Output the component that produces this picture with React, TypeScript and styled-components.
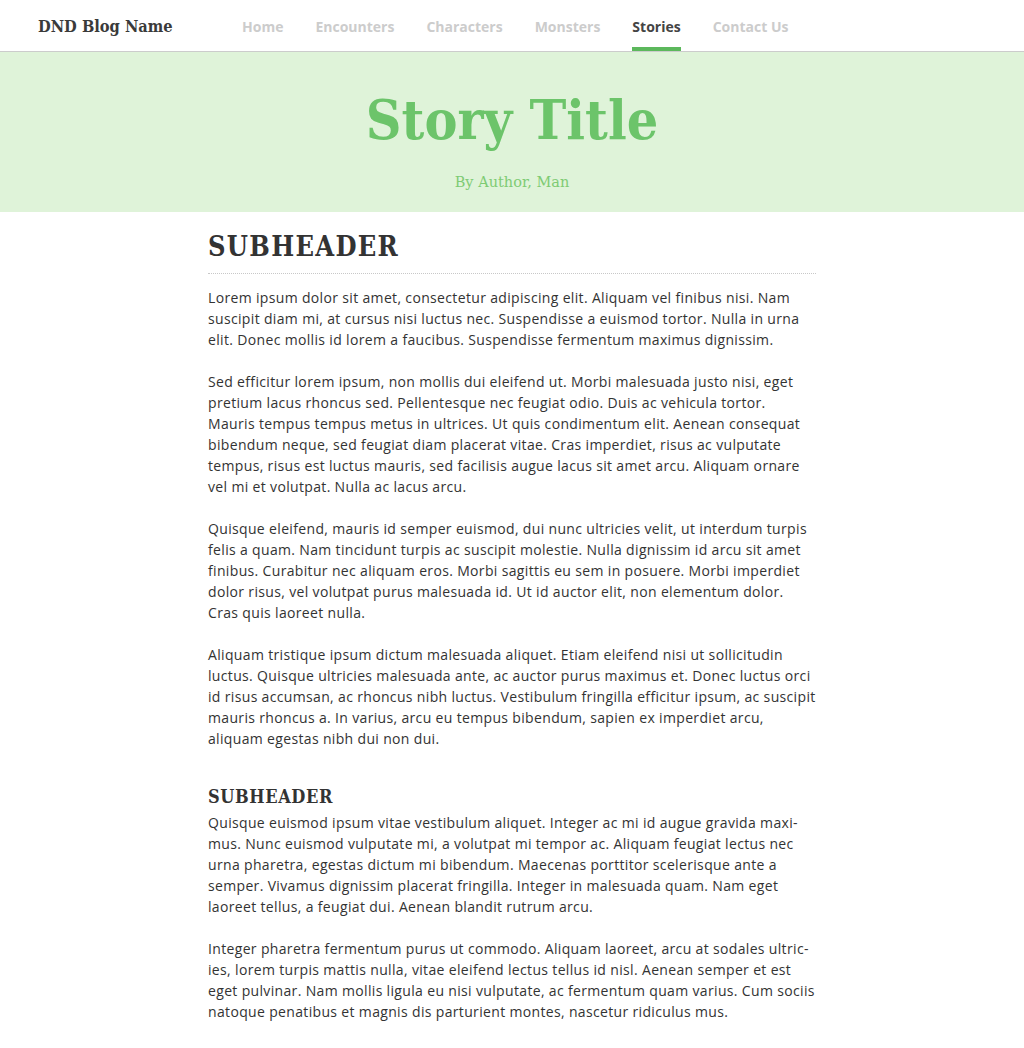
import React from "react";
import styled, { createGlobalStyle } from "styled-components";

const GlobalStyle = createGlobalStyle`
  html, body { margin: 0; padding: 0; background: #ffffff; }
  body { font-family: "Open Sans", "Liberation Sans", sans-serif; color: #333333; }
  * { box-sizing: border-box; }
`;

const slab = `"DejaVu Serif Condensed", "DejaVu Serif", "Liberation Serif", serif`;
const slabWide = `"DejaVu Serif", "Liberation Serif", serif`;

const Header = styled.header`
  display: flex;
  align-items: stretch;
  height: 52px;
  border-bottom: 1px solid #cccccc;
  background: #ffffff;
`;

const Logo = styled.div`
  display: flex;
  align-items: center;
  padding-left: 38px;
  padding-top: 1px;
  width: 242px;
  font-family: ${slab};
  font-stretch: condensed;
  font-weight: bold;
  font-size: 16.3px;
  color: #3a3a3a;
  white-space: nowrap;
`;

const Nav = styled.nav`
  display: flex;
  gap: 32px;
`;

const NavLink = styled.a<{ $active?: boolean }>`
  display: flex;
  align-items: center;
  padding-top: 5px;
  border-bottom: 4px solid ${(p) => (p.$active ? "#5cb85c" : "transparent")};
  font-family: "Open Sans", sans-serif;
  font-weight: 700;
  font-size: 14px;
  color: ${(p) => (p.$active ? "#444444" : "#cccccc")};
  text-decoration: none;
  white-space: nowrap;
`;

const Hero = styled.section`
  height: 160px;
  background: #dff3d9;
  display: flex;
  flex-direction: column;
  align-items: center;
`;

const Title = styled.h1`
  margin: 33px 0 0;
  font-family: ${slab};
  font-stretch: condensed;
  font-weight: bold;
  font-size: 55px;
  line-height: 70px;
  color: #6cc46a;
`;

const Byline = styled.p`
  margin: 17px 0 0;
  font-family: ${slabWide};
  font-weight: 300;
  font-size: 14.5px;
  line-height: 20px;
  color: #7ecb74;
`;

const Article = styled.article`
  width: 608px;
  margin: 0 auto;
  padding-bottom: 16px;
`;

const SubHeader = styled.h2<{ $small?: boolean }>`
  margin: ${(p) => (p.$small ? "37px 0 4px" : "19px 0 13px")};
  padding-bottom: ${(p) => (p.$small ? "0" : "10px")};
  border-bottom: ${(p) => (p.$small ? "none" : "1px dotted #c8c8c8")};
  font-family: ${slab};
  font-stretch: condensed;
  font-weight: bold;
  font-size: ${(p) => (p.$small ? "18px" : "27px")};
  line-height: 1.2;
  letter-spacing: ${(p) => (p.$small ? "0.6px" : "1.3px")};
  color: #333333;
`;

const Para = styled.p`
  margin: 0 0 21px;
  font-size: 14px;
  line-height: 21px;
  letter-spacing: 0.34px;
  color: #333333;
  &:last-child { margin-bottom: 0; }
`;

const navItems = ["Home", "Encounters", "Characters", "Monsters", "Stories", "Contact Us"];

export default function App() {
  return (
    <>
      <GlobalStyle />
      <Header>
        <Logo>DND Blog Name</Logo>
        <Nav>
          {navItems.map((n) => (
            <NavLink key={n} $active={n === "Stories"}>
              {n}
            </NavLink>
          ))}
        </Nav>
      </Header>
      <Hero>
        <Title>Story Title</Title>
        <Byline>By Author, Man</Byline>
      </Hero>
      <Article>
        <section>
          <SubHeader>SUBHEADER</SubHeader>
          <Para>
            Lorem ipsum dolor sit amet, consectetur adipiscing elit. Aliquam vel finibus nisi. Nam suscipit diam mi, at
            cursus nisi luctus nec. Suspendisse a euismod tortor. Nulla in urna elit. Donec mollis id lorem a faucibus.
            Suspendisse fermentum maximus dignissim.
          </Para>
          <Para>
            Sed efficitur lorem ipsum, non mollis dui eleifend ut. Morbi malesuada justo nisi, eget pretium lacus rhoncus
            sed. Pellentesque nec feugiat odio. Duis ac vehicula tortor. Mauris tempus tempus metus in ultrices. Ut quis
            condimentum elit. Aenean consequat bibendum neque, sed feugiat diam placerat vitae. Cras imperdiet, risus ac
            vulputate tempus, risus est luctus mauris, sed facilisis augue lacus sit amet arcu. Aliquam ornare vel mi et
            volutpat. Nulla ac lacus arcu.
          </Para>
          <Para>
            Quisque eleifend, mauris id semper euismod, dui nunc ultricies velit, ut interdum turpis felis a quam. Nam
            tincidunt turpis ac suscipit molestie. Nulla dignissim id arcu sit amet finibus. Curabitur nec aliquam eros.
            Morbi sagittis eu sem in posuere. Morbi imperdiet dolor risus, vel volutpat purus malesuada id. Ut id auctor
            elit, non elementum dolor. Cras quis laoreet nulla.
          </Para>
          <Para>
            Aliquam tristique ipsum dictum malesuada aliquet. Etiam eleifend nisi ut sollicitudin luctus. Quisque
            ultricies malesuada ante, ac auctor purus maximus et. Donec luctus orci id risus accumsan, ac rhoncus nibh
            luctus. Vestibulum fringilla efficitur ipsum, ac suscipit mauris rhoncus a. In varius, arcu eu tempus
            bibendum, sapien ex imperdiet arcu, aliquam egestas nibh dui non dui.
          </Para>
        </section>
        <section>
          <SubHeader $small>SUBHEADER</SubHeader>
          <Para>
            Quisque euismod ipsum vitae vestibulum aliquet. Integer ac mi id augue gravida maxi{"\u00AD"}mus. Nunc
            euismod vulputate mi, a volutpat mi tempor ac. Aliquam feugiat lectus nec urna pharetra, egestas dictum mi
            bibendum. Maecenas porttitor scelerisque ante a semper. Vivamus dignissim placerat fringilla. Integer in
            malesuada quam. Nam eget laoreet tellus, a feugiat dui. Aenean blandit rutrum arcu.
          </Para>
          <Para>
            Integer pharetra fermentum purus ut commodo. Aliquam laoreet, arcu at sodales ultric{"\u00AD"}ies, lorem
            turpis mattis nulla, vitae eleifend lectus tellus id nisl. Aenean semper et est eget pulvinar. Nam mollis
            ligula eu nisi vulputate, ac fermentum quam varius. Cum sociis natoque penatibus et magnis dis parturient
            montes, nascetur ridiculus mus.
          </Para>
        </section>
      </Article>
    </>
  );
}
